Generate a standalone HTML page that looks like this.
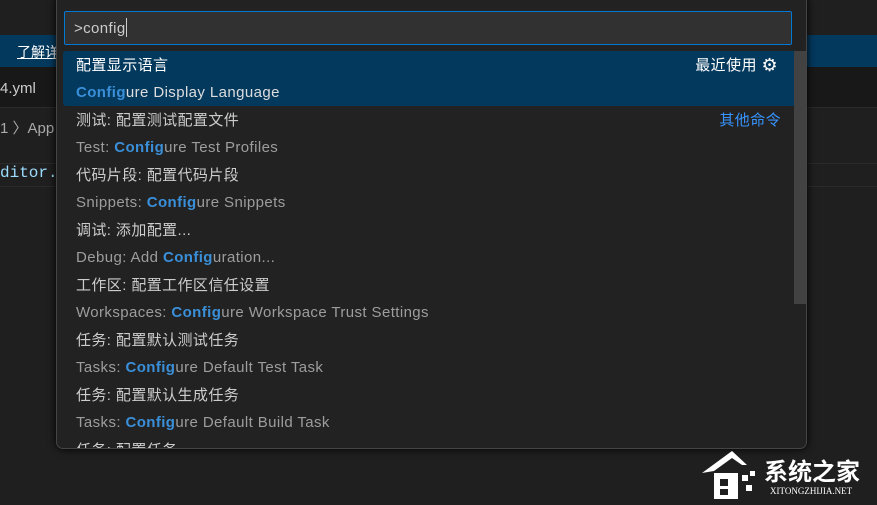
<!DOCTYPE html>
<html><head><meta charset="utf-8"><style>
*{margin:0;padding:0;box-sizing:border-box}
body{width:877px;height:505px;background:#1f1f1f;position:relative;overflow:hidden;font-family:"Segoe UI","Liberation Sans","Noto Sans CJK SC",sans-serif;font-size:15px;color:#ccc}
.abs{position:absolute}
.hl{font-weight:bold;color:#3a8fd9}
.s{letter-spacing:0.4px}
</style></head><body>
<div class="abs" style="left:0;top:35px;width:877px;height:32px;background:#04395e"></div>
<div class="abs" style="left:17px;top:42px;color:#fff;text-decoration:underline;font-size:14px">了解详</div>
<div class="abs" style="left:0;top:67px;width:877px;height:41px;background:#181818;border-bottom:1px solid #2b2b2b"></div>
<div class="abs" style="left:0;top:80px;font-size:15px;color:#ccc">4.yml</div>
<div class="abs" style="left:0;top:117px;font-size:15px;color:#aaa">1 〉App</div>
<div class="abs" style="left:0;top:163px;width:877px;height:24px;border-top:1px solid #2b2b2b;border-bottom:1px solid #2b2b2b"></div>
<div class="abs" style="left:0;top:164px;font-family:'Liberation Mono',monospace;font-size:16px;color:#9cdcfe">ditor.w</div>

<div class="abs" style="left:56px;top:-6px;width:751px;height:455px;background:#222222;border:1px solid #454545;border-radius:7px;box-shadow:0 0 8px #000;overflow:hidden">
 <div class="abs" style="left:7px;top:16px;width:728px;height:34px;background:#313131;border:1px solid #0078d4;border-radius:2px"></div>
 <div class="abs s" style="left:17px;top:23px;font-size:15px;color:#ccc">&gt;config<span style="display:inline-block;width:1px;height:19px;background:#ccc;vertical-align:-4px"></span></div>
 <div class="abs" style="left:6px;top:56px;width:737px;height:55px;background:#04395e;border-radius:3px"></div>
 <div class="abs" style="left:737px;top:56px;width:13px;height:253px;background:#424242"></div>
 <div class="abs s" style="left:19px;top:57px;width:720px;line-height:27px">
  <div style="height:55px;position:relative"><div style="color:#fff">配置显示语言</div><div style="color:#ddd"><span class="hl">Config</span>ure Display Language</div>
   <div class="abs" style="right:18px;top:0;color:#fff">最近使用 <span style="font-size:18px;vertical-align:-1px">⚙</span></div></div>
  <div style="height:55px;position:relative"><div>测试: 配置测试配置文件</div><div style="color:#9d9d9d">Test: <span class="hl">Config</span>ure Test Profiles</div>
   <div class="abs" style="right:15px;top:0;color:#3794ff">其他命令</div></div>
  <div style="height:55px"><div>代码片段: 配置代码片段</div><div style="color:#9d9d9d">Snippets: <span class="hl">Config</span>ure Snippets</div></div>
  <div style="height:55px"><div>调试: 添加配置...</div><div style="color:#9d9d9d">Debug: Add <span class="hl">Config</span>uration...</div></div>
  <div style="height:55px"><div>工作区: 配置工作区信任设置</div><div style="color:#9d9d9d">Workspaces: <span class="hl">Config</span>ure Workspace Trust Settings</div></div>
  <div style="height:55px"><div>任务: 配置默认测试任务</div><div style="color:#9d9d9d">Tasks: <span class="hl">Config</span>ure Default Test Task</div></div>
  <div style="height:55px"><div>任务: 配置默认生成任务</div><div style="color:#9d9d9d">Tasks: <span class="hl">Config</span>ure Default Build Task</div></div>
  <div style="height:55px"><div>任务: 配置任务</div></div>
 </div>
</div>

<svg class="abs" style="left:702px;top:451px" width="60" height="50" viewBox="0 0 60 50"><path d="M0 22 L30 0 L45 14 L40 14 L30 7 L12 20 Z" fill="#fff"/><rect x="12" y="22" width="24" height="26" fill="#fff"/><rect x="18" y="28" width="8" height="7" fill="#1f1f1f"/><rect x="18" y="38" width="8" height="6" fill="#1f1f1f"/><rect x="40" y="24" width="6" height="6" fill="#fff"/><rect x="48" y="20" width="5" height="5" fill="#fff"/><rect x="44" y="34" width="6" height="6" fill="#fff"/></svg>
<div class="abs" style="left:764px;top:456px;color:#fff;font-size:24px;font-weight:bold;font-family:'Noto Sans CJK SC',sans-serif;line-height:28px">系统之家</div>
<div class="abs" style="left:770px;top:486px;color:#fff;font-size:9px;font-family:'Liberation Serif',serif">XITONGZHIJIA.NET</div>
</body></html>
